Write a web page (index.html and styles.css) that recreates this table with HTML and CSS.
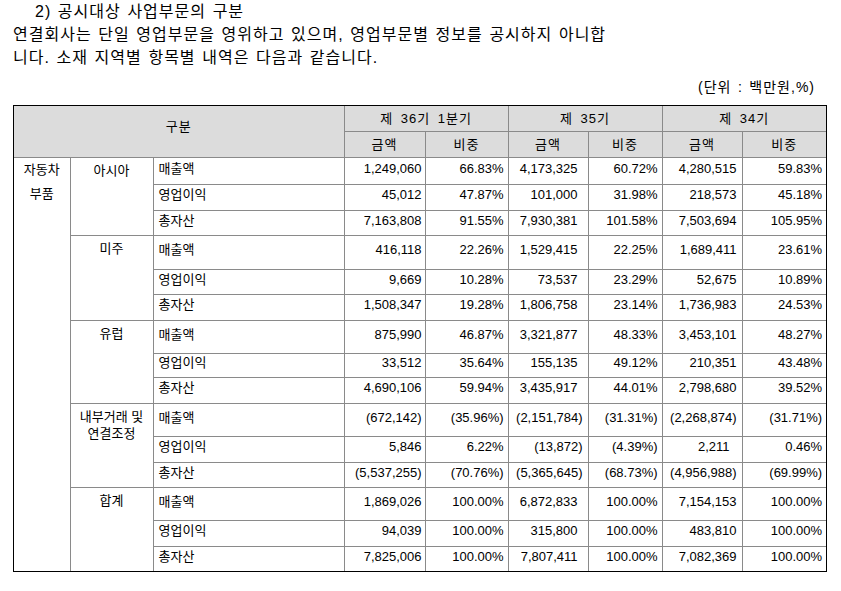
FILE: index.html
```html
<!DOCTYPE html>
<html lang="ko">
<head>
<meta charset="utf-8">
<title>공시대상 사업부문의 구분</title>
<link rel="stylesheet" href="styles.css">
</head>
<body>
<div class="intro">
  <p class="title">2) 공시대상 사업부문의 구분</p>
  <p>연결회사는 단일 영업부문을 영위하고 있으며, 영업부문별 정보를 공시하지 아니합<br>니다. 소재 지역별 항목별 내역은 다음과 같습니다.</p>
</div>
<p class="unit">(단위 : 백만원,%)</p>
<div class="frame">
<table class="seg">
  <colgroup>
    <col class="w1"><col class="w2"><col class="w3">
    <col class="w4"><col class="w5"><col class="w6">
    <col class="w7"><col class="w8"><col class="w9">
  </colgroup>
  <thead>
    <tr class="r25">
      <th rowspan="2" colspan="3" class="gubun">구분</th>
      <th colspan="2">제 36기 1분기</th>
      <th colspan="2">제 35기</th>
      <th colspan="2">제 34기</th>
    </tr>
    <tr class="r26">
      <th>금액</th><th>비중</th><th>금액</th><th>비중</th><th>금액</th><th>비중</th>
    </tr>
  </thead>
  <tbody>
    <tr class="r27">
      <td rowspan="15" class="seg1">자동차 부품</td>
      <td rowspan="3" class="reg">아시아</td>
      <td class="lbl">매출액</td>
      <td class="a36">1,249,060</td><td class="p36">66.83%</td>
      <td class="a35 pos">4,173,325</td><td class="p35">60.72%</td>
      <td class="a34">4,280,515</td><td class="p34">59.83%</td>
    </tr>
    <tr class="r26">
      <td class="lbl">영업이익</td>
      <td class="a36">45,012</td><td class="p36">47.87%</td>
      <td class="a35 pos">101,000</td><td class="p35">31.98%</td>
      <td class="a34">218,573</td><td class="p34">45.18%</td>
    </tr>
    <tr class="r25">
      <td class="lbl">총자산</td>
      <td class="a36">7,163,808</td><td class="p36">91.55%</td>
      <td class="a35 pos">7,930,381</td><td class="p35">101.58%</td>
      <td class="a34">7,503,694</td><td class="p34">105.95%</td>
    </tr>
    <tr class="r34">
      <td rowspan="3" class="reg">미주</td>
      <td class="lbl">매출액</td>
      <td class="a36">416,118</td><td class="p36">22.26%</td>
      <td class="a35 pos">1,529,415</td><td class="p35">22.25%</td>
      <td class="a34">1,689,411</td><td class="p34">23.61%</td>
    </tr>
    <tr class="r25">
      <td class="lbl">영업이익</td>
      <td class="a36">9,669</td><td class="p36">10.28%</td>
      <td class="a35 pos">73,537</td><td class="p35">23.29%</td>
      <td class="a34">52,675</td><td class="p34">10.89%</td>
    </tr>
    <tr class="r26">
      <td class="lbl">총자산</td>
      <td class="a36">1,508,347</td><td class="p36">19.28%</td>
      <td class="a35 pos">1,806,758</td><td class="p35">23.14%</td>
      <td class="a34">1,736,983</td><td class="p34">24.53%</td>
    </tr>
    <tr class="r33">
      <td rowspan="3" class="reg">유럽</td>
      <td class="lbl">매출액</td>
      <td class="a36">875,990</td><td class="p36">46.87%</td>
      <td class="a35 pos">3,321,877</td><td class="p35">48.33%</td>
      <td class="a34">3,453,101</td><td class="p34">48.27%</td>
    </tr>
    <tr class="r24">
      <td class="lbl">영업이익</td>
      <td class="a36">33,512</td><td class="p36">35.64%</td>
      <td class="a35 pos">155,135</td><td class="p35">49.12%</td>
      <td class="a34">210,351</td><td class="p34">43.48%</td>
    </tr>
    <tr class="r26">
      <td class="lbl">총자산</td>
      <td class="a36">4,690,106</td><td class="p36">59.94%</td>
      <td class="a35 pos">3,435,917</td><td class="p35">44.01%</td>
      <td class="a34">2,798,680</td><td class="p34">39.52%</td>
    </tr>
    <tr class="r33">
      <td rowspan="3" class="reg">내부거래 및 연결조정</td>
      <td class="lbl">매출액</td>
      <td class="a36">(672,142)</td><td class="p36">(35.96%)</td>
      <td class="a35">(2,151,784)</td><td class="p35">(31.31%)</td>
      <td class="a34">(2,268,874)</td><td class="p34">(31.71%)</td>
    </tr>
    <tr class="r26">
      <td class="lbl">영업이익</td>
      <td class="a36">5,846</td><td class="p36">6.22%</td>
      <td class="a35">(13,872)</td><td class="p35">(4.39%)</td>
      <td class="a34 odd">2,211</td><td class="p34">0.46%</td>
    </tr>
    <tr class="r25">
      <td class="lbl">총자산</td>
      <td class="a36">(5,537,255)</td><td class="p36">(70.76%)</td>
      <td class="a35">(5,365,645)</td><td class="p35">(68.73%)</td>
      <td class="a34">(4,956,988)</td><td class="p34">(69.99%)</td>
    </tr>
    <tr class="r33">
      <td rowspan="3" class="reg">합계</td>
      <td class="lbl">매출액</td>
      <td class="a36">1,869,026</td><td class="p36">100.00%</td>
      <td class="a35 pos">6,872,833</td><td class="p35">100.00%</td>
      <td class="a34">7,154,153</td><td class="p34">100.00%</td>
    </tr>
    <tr class="r26">
      <td class="lbl">영업이익</td>
      <td class="a36">94,039</td><td class="p36">100.00%</td>
      <td class="a35 pos">315,800</td><td class="p35">100.00%</td>
      <td class="a34">483,810</td><td class="p34">100.00%</td>
    </tr>
    <tr class="r25">
      <td class="lbl">총자산</td>
      <td class="a36">7,825,006</td><td class="p36">100.00%</td>
      <td class="a35 pos">7,807,411</td><td class="p35">100.00%</td>
      <td class="a34">7,082,369</td><td class="p34">100.00%</td>
    </tr>
  </tbody>
</table>
</div>
</body>
</html>
```

FILE: styles.css
```css
body {
  margin: 0;
  background: #fff;
  color: #000;
  font-family: "Liberation Sans", "Noto Sans CJK KR", sans-serif;
}

.intro {
  padding-left: 13px;
  font-size: 16px;
  line-height: 23px;
  letter-spacing: 1px;
  word-spacing: 1.2px;
}

.intro p {
  margin: 0;
}

.intro .title {
  padding-left: 22px;
}

.unit {
  margin: 8px 0 0;
  padding-right: 26px;
  font-size: 14px;
  line-height: 21px;
  text-align: right;
  letter-spacing: 1px;
  word-spacing: 1.6px;
}

.frame {
  margin: 7px 0 0 13px;
  width: 812px;
  border: 1px solid #000;
}

.seg {
  width: 812px;
  table-layout: fixed;
  border-collapse: collapse;
  border-style: hidden;
  font-size: 13px;
}

.seg th,
.seg td {
  border: 1px solid #8a8a8a;
  padding: 0;
  line-height: 16px;
  white-space: nowrap;
  word-break: keep-all;
}

.w1 { width: 56px; }
.w2 { width: 83px; }
.w3 { width: 191px; }
.w4 { width: 81px; }
.w5 { width: 83px; }
.w6 { width: 80px; }
.w7 { width: 74px; }
.w8 { width: 80px; }
.w9 { width: 84px; }

.r24 { height: 24px; }
.r25 { height: 25px; }
.r26 { height: 26px; }
.r27 { height: 27px; }
.r33 { height: 33px; }
.r34 { height: 34px; }

.seg th {
  background: #dcdcdc;
  font-weight: normal;
  text-align: center;
  vertical-align: middle;
  padding-top: 2px;
  letter-spacing: 1px;
  word-spacing: 3px;
}

.seg th.gubun {
  padding-top: 0;
  padding-bottom: 9px;
}

.seg td {
  vertical-align: middle;
  padding-bottom: 4px;
  text-align: right;
}

.seg td.seg1 {
  white-space: normal;
  vertical-align: top;
  text-align: center;
  line-height: 24px;
  padding: 0 2px;
}

.seg td.reg {
  white-space: normal;
  vertical-align: top;
  text-align: center;
  line-height: 17px;
  padding: 4px 2px 0;
}

.seg td.lbl {
  text-align: left;
  padding-left: 5px;
}

.seg td.a36 { padding-right: 3px; }
.seg td.p36 { padding-right: 4px; }
.seg td.a35 { padding-right: 5px; }
.seg td.a35.pos { padding-right: 10px; }
.seg td.p35 { padding-right: 4px; }
.seg td.a34 { padding-right: 5px; }
.seg td.a34.odd { padding-right: 12px; }
.seg td.p34 { padding-right: 4px; }
```
